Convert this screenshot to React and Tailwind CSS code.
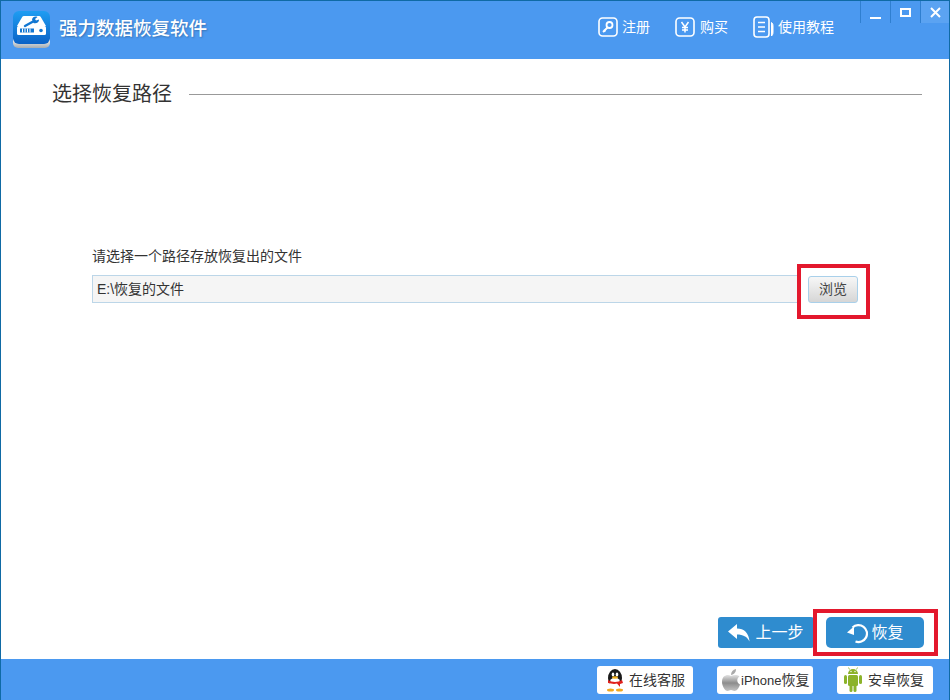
const font = { fontFamily: '"Liberation Sans", "Noto Sans CJK SC", sans-serif' };

const LogoIcon = () => (
  <svg width="38" height="38" viewBox="0 0 38 38">
    <defs>
      <linearGradient id="logoBg" x1="0" y1="0" x2="0" y2="1">
        <stop offset="0" stopColor="#1f9df2" />
        <stop offset="1" stopColor="#0a62c6" />
      </linearGradient>
      <linearGradient id="logoBase" x1="0" y1="0" x2="0" y2="1">
        <stop offset="0" stopColor="#f4f4f4" />
        <stop offset="1" stopColor="#a3acb3" />
      </linearGradient>
    </defs>
    <path d="M0 28h37v4a5 5 0 0 1-5 5H5a5 5 0 0 1-5-5z" fill="url(#logoBase)" />
    <rect x="0" y="0" width="37" height="33" rx="6" fill="url(#logoBg)" />
    <path d="M11 5h15a2 2 0 0 1 1.800 1L33 15H4l5.200-9A2 2 0 0 1 11 5z" fill="#fff" />
    <rect x="4" y="15" width="29" height="9" rx="1.500" fill="#fff" />
    <rect x="7" y="17.500" width="14" height="4" fill="#1277d2" />
    <path d="M9.500 17.500v4M12 17.500v4M14.500 17.500v4M17 17.500v4" stroke="#fff" strokeWidth="1" />
    <circle cx="28" cy="19.500" r="1.800" fill="#1277d2" />
    <path d="M12 15l9-5" stroke="#1277d2" strokeWidth="2.400" strokeLinecap="round" />
    <path d="M19 8.500c.5-2.500 3-3.500 5.500-2.500l-2.500 2 1 1.500 3-1c.3 2.500-2.500 4.500-5.500 3.500z" fill="#1277d2" />
  </svg>
);

const KeyIcon = () => (
  <svg width="20" height="20" viewBox="0 0 20 20" fill="none" stroke="#fff">
    <rect x="1" y="1" width="18" height="18" rx="3.500" strokeWidth="1.600" />
    <circle cx="11.500" cy="8" r="3" strokeWidth="1.800" />
    <path d="M9.500 10.500L5 15M5.500 13l2 1.500" strokeWidth="1.800" />
  </svg>
);

const YenIcon = () => (
  <svg width="20" height="20" viewBox="0 0 20 20" fill="none" stroke="#fff">
    <rect x="1" y="1" width="18" height="18" rx="3.500" strokeWidth="1.600" />
    <path d="M6.500 5L10 10l3.500-5M10 10v5.500M7 10.500h6M7 13h6" strokeWidth="1.500" />
  </svg>
);

const BookIcon = () => (
  <svg width="21" height="22" viewBox="0 0 21 22" fill="none" stroke="#fff">
    <rect x="1" y="1" width="15" height="20" rx="3" strokeWidth="1.600" />
    <path d="M5 6.500h7M5 11h7M5 15.500h7" strokeWidth="1.300" />
    <path d="M18.500 6.500c1.200.8 1.500 2 1.500 3v7c0 1.500-.5 2.500-1.500 3.500z" fill="#fff" strokeWidth="1" />
  </svg>
);

const BackArrow = () => (
  <svg width="22" height="18" viewBox="0 0 22 18">
    <path d="M0 7.500L9 0v4.500c7 0 12 4.500 12.500 13C19 12.500 15 10.500 9 10.500V15z" fill="#fff" />
  </svg>
);

const RestoreIcon = () => (
  <svg width="22" height="22" viewBox="0 0 22 22" fill="none">
    <path d="M6.500 5.500A8.500 8.500 0 1 1 9.500 19.500" stroke="#fff" strokeWidth="2.200" />
    <path d="M1 10.500L8 4.500V13z" fill="#fff" />
  </svg>
);

const QQIcon = () => (
  <svg width="20" height="24" viewBox="0 0 20 24">
    <ellipse cx="10" cy="10" rx="7" ry="9" fill="#1a1a1a" />
    <ellipse cx="10" cy="15.500" rx="5.500" ry="6" fill="#fff" />
    <ellipse cx="8" cy="6.500" rx="1.300" ry="2" fill="#fff" />
    <ellipse cx="12" cy="6.500" rx="1.300" ry="2" fill="#fff" />
    <ellipse cx="10" cy="9.500" rx="3" ry="1.300" fill="#f2b01e" />
    <path d="M3 12c4 2.500 10 2.500 14 0l1 3-3 1v3l-3-3.500c-2 .5-4 .5-6 0L3 15z" fill="#e0201c" />
    <ellipse cx="5.500" cy="22" rx="3.500" ry="1.500" fill="#f2a91c" />
    <ellipse cx="14.500" cy="22" rx="3.500" ry="1.500" fill="#f2a91c" />
  </svg>
);

const AppleIcon = () => (
  <svg width="20" height="24" viewBox="0 0 20 24">
    <defs>
      <linearGradient id="appleFill" x1="0" y1="0" x2="0" y2="1">
        <stop offset="0" stopColor="#e2e2e2" />
        <stop offset="0.500" stopColor="#8c8c8c" />
        <stop offset="1" stopColor="#c4c4c4" />
      </linearGradient>
    </defs>
    <path d="M10 8C7 6 1 7 1 14c0 4 3 9 5.500 9 1.500 0 2-1 3.500-1s2 1 3.500 1c2.500 0 4.500-3.500 5.500-6.500-3.500-1.500-3.500-6.500-.5-8C16.500 6.500 12.500 6.800 10 8z" fill="url(#appleFill)" />
    <path d="M10 7c0-3 2-5.500 5-6 .2 3-2 5.500-5 6z" fill="#aaa" />
  </svg>
);

const AndroidIcon = () => (
  <svg width="18" height="26" viewBox="0 0 18 26" fill="#8cb32a">
    <path d="M4 7a5 5 0 0 1 10 0z" />
    <path d="M5.500 2.500L4.500 .5M12.500 2.500l1-2" stroke="#8cb32a" strokeWidth=".8" />
    <rect x="4" y="8" width="10" height="11" rx="1.500" />
    <rect x="0" y="8" width="3" height="9" rx="1.500" />
    <rect x="15" y="8" width="3" height="9" rx="1.500" />
    <rect x="5.500" y="17" width="3" height="8" rx="1.500" />
    <rect x="9.500" y="17" width="3" height="8" rx="1.500" />
    <circle cx="7" cy="4.500" r=".7" fill="#fff" />
    <circle cx="11" cy="4.500" r=".7" fill="#fff" />
  </svg>
);

const NavItem = ({ icon, label, className }) => (
  <div className={`flex items-center text-[14px] text-white ${className}`}>
    {icon}
    <span>{label}</span>
  </div>
);

const FooterButton = ({ icon, children, className }) => (
  <div className={`flex items-center w-[96px] h-[28px] bg-white rounded-[3px] text-[14px] text-[#333] ${className}`}>
    {icon}
    <span className="whitespace-nowrap">{children}</span>
  </div>
);

export default function App() {
  return (
    <div style={font} className="relative flex flex-col w-[950px] h-[700px] bg-white border-x border-t border-[#0f6aa5] overflow-hidden">
      <header className="relative flex items-center shrink-0 h-[58px] bg-[#4b99f0] pl-[12px]">
        <LogoIcon />
        <h1 className="ml-[8px] mb-[2px] text-[18.5px] font-medium text-white [text-shadow:1px_1px_2px_rgba(0,0,0,0.25)]">强力数据恢复软件</h1>
        <nav className="ml-auto mr-[115px] flex items-center gap-[25px] pb-[6px]">
          <NavItem icon={<KeyIcon />} label="注册" className="gap-[4px]" />
          <NavItem icon={<YenIcon />} label="购买" className="gap-[5px]" />
          <NavItem icon={<BookIcon />} label="使用教程" className="gap-[4px]" />
        </nav>
        <div className="absolute top-0 right-0 flex h-[22px]">
          <div className="flex items-end justify-center w-[30px] h-full border-l border-[#2f7fd0] pb-[4px]">
            <div className="w-[11px] h-[2px] bg-white" />
          </div>
          <div className="flex items-center justify-center w-[30px] h-full border-l border-[#2f7fd0]">
            <div className="w-[11px] h-[9px] border-2 border-white" />
          </div>
          <div className="flex items-center justify-center w-[29px] h-full border-l border-[#2f7fd0] bg-[#5ba3f2]">
            <svg width="11" height="11" viewBox="0 0 11 11" stroke="#fff" strokeWidth="2">
              <path d="M1 1l9 9M10 1l-9 9" />
            </svg>
          </div>
        </div>
      </header>

      <main className="flex flex-col flex-1 min-h-0">
        <div className="flex items-center pl-[51px] pr-[27px] pt-[20px]">
          <h2 className="text-[20px] text-[#333] whitespace-nowrap leading-[30px]">选择恢复路径</h2>
          <div className="flex-1 ml-[17px] h-px bg-[#999]" />
        </div>

        <div className="pl-[91px] pr-[91px] mt-[138px]">
          <p className="text-[14px] text-[#333] leading-[18px]">请选择一个路径存放恢复出的文件</p>
          <div className="flex items-center mt-[10px]">
            <div className="flex items-center flex-1 h-[28px] pl-[4px] bg-[#f5f5f5] border border-[#bcd6e8] text-[14px] text-[#333]">
              E:\恢复的文件
            </div>
            <button className="ml-[10px] w-[50px] h-[27px] rounded-[3px] border border-[#a9d0ea] bg-gradient-to-b from-[#f7f7f7] to-[#d6d6d6] text-[14px] text-[#444]">
              浏览
            </button>
          </div>
        </div>

        <div className="flex justify-end gap-[12px] mt-auto pr-[25px] pb-[11px]">
          <button className="flex items-center justify-center gap-[5px] w-[96px] h-[31px] rounded-[3px] bg-[#2f8ccf] text-[16px] text-white">
            <BackArrow />
            上一步
          </button>
          <button className="flex items-center justify-center gap-[3px] w-[98px] h-[31px] rounded-[5px] bg-[#2f8ccf] text-[16px] text-white">
            <RestoreIcon />
            恢复
          </button>
        </div>
      </main>

      <footer className="flex items-center justify-end gap-[24px] shrink-0 h-[41px] bg-[#4b99f0] pr-[16px] pt-[1px]">
        <FooterButton icon={<QQIcon />} className="pl-[8px] gap-[4px]">在线客服</FooterButton>
        <FooterButton icon={<AppleIcon />} className="pl-[4px] gap-[0px]">
          <span className="text-[13px]">iPhone</span>恢复
        </FooterButton>
        <FooterButton icon={<AndroidIcon />} className="pl-[7px] gap-[6px]">安卓恢复</FooterButton>
      </footer>

      <div className="absolute left-[796px] top-[263px] w-[73px] h-[55px] border-[4px] border-[#e3182d]" />
      <div className="absolute left-[812px] top-[608px] w-[125px] h-[47px] border-[4px] border-[#e3182d]" />
    </div>
  );
}
